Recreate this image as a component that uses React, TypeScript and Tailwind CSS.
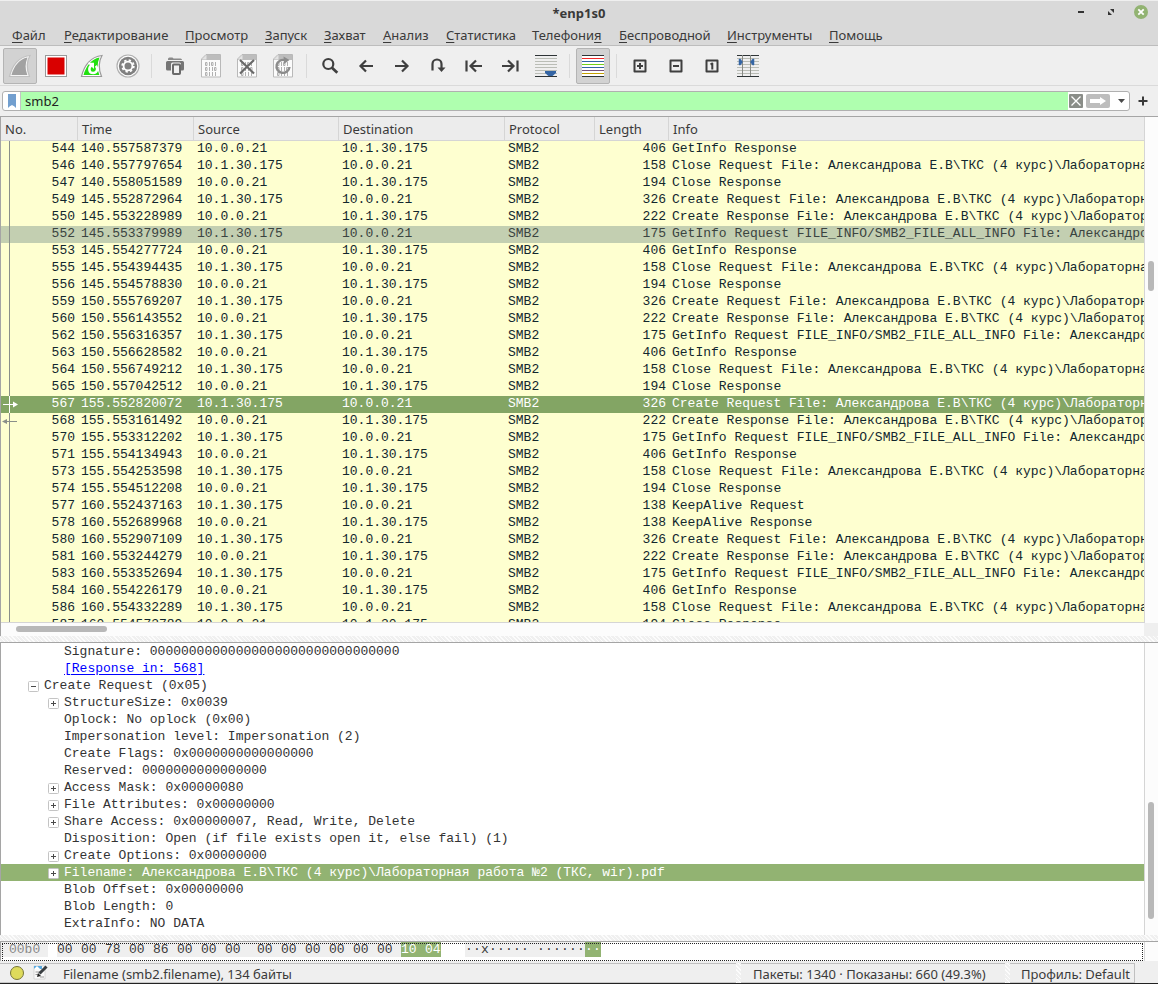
import React from 'react';

const menu = [
  ['', 'Ф', 'айл'],
  ['', 'Р', 'едактирование'],
  ['', 'П', 'росмотр'],
  ['', 'З', 'апуск'],
  ['', 'З', 'ахват'],
  ['', 'А', 'нализ'],
  ['', 'С', 'татистика'],
  ['Телефони', 'я', ''],
  ['', 'Б', 'еспроводной'],
  ['', 'И', 'нструменты'],
  ['', 'П', 'омощь'],
];

const CLIENT = '10.1.30.175';
const SERVER = '10.0.0.21';
const PATH = 'Александрова Е.В\\ТКС (4 курс)\\Лабораторная работа №2';

type Kind = 'infoRes' | 'closeReq' | 'closeRes' | 'createReq' | 'createRes' | 'infoReq' | 'aliveReq' | 'aliveRes';

const kinds: Record<Kind, { fromClient: boolean; length: number; info: string }> = {
  infoRes: { fromClient: false, length: 406, info: 'GetInfo Response' },
  closeReq: { fromClient: true, length: 158, info: 'Close Request File: ' + PATH },
  closeRes: { fromClient: false, length: 194, info: 'Close Response' },
  createReq: { fromClient: true, length: 326, info: 'Create Request File: ' + PATH },
  createRes: { fromClient: false, length: 222, info: 'Create Response File: ' + PATH },
  infoReq: { fromClient: true, length: 175, info: 'GetInfo Request FILE_INFO/SMB2_FILE_ALL_INFO File: ' + PATH },
  aliveReq: { fromClient: true, length: 138, info: 'KeepAlive Request' },
  aliveRes: { fromClient: false, length: 138, info: 'KeepAlive Response' },
};

const packets: [number, string, Kind][] = [
  [544, '140.557587379', 'infoRes'],
  [546, '140.557797654', 'closeReq'],
  [547, '140.558051589', 'closeRes'],
  [549, '145.552872964', 'createReq'],
  [550, '145.553228989', 'createRes'],
  [552, '145.553379989', 'infoReq'],
  [553, '145.554277724', 'infoRes'],
  [555, '145.554394435', 'closeReq'],
  [556, '145.554578830', 'closeRes'],
  [559, '150.555769207', 'createReq'],
  [560, '150.556143552', 'createRes'],
  [562, '150.556316357', 'infoReq'],
  [563, '150.556628582', 'infoRes'],
  [564, '150.556749212', 'closeReq'],
  [565, '150.557042512', 'closeRes'],
  [567, '155.552820072', 'createReq'],
  [568, '155.553161492', 'createRes'],
  [570, '155.553312202', 'infoReq'],
  [571, '155.554134943', 'infoRes'],
  [573, '155.554253598', 'closeReq'],
  [574, '155.554512208', 'closeRes'],
  [577, '160.552437163', 'aliveReq'],
  [578, '160.552689968', 'aliveRes'],
  [580, '160.552907109', 'createReq'],
  [581, '160.553244279', 'createRes'],
  [583, '160.553352694', 'infoReq'],
  [584, '160.554226179', 'infoRes'],
  [586, '160.554332289', 'closeReq'],
  [587, '160.554573789', 'closeRes'],
];

const tree: { text: string; box?: '+' | '-'; top?: boolean; link?: boolean; selected?: boolean }[] = [
  { text: 'Signature: 00000000000000000000000000000000' },
  { text: '[Response in: 568]', link: true },
  { text: 'Create Request (0x05)', box: '-', top: true },
  { text: 'StructureSize: 0x0039', box: '+' },
  { text: 'Oplock: No oplock (0x00)' },
  { text: 'Impersonation level: Impersonation (2)' },
  { text: 'Create Flags: 0x0000000000000000' },
  { text: 'Reserved: 0000000000000000' },
  { text: 'Access Mask: 0x00000080', box: '+' },
  { text: 'File Attributes: 0x00000000', box: '+' },
  { text: 'Share Access: 0x00000007, Read, Write, Delete', box: '+' },
  { text: 'Disposition: Open (if file exists open it, else fail) (1)' },
  { text: 'Create Options: 0x00000000', box: '+' },
  { text: 'Filename: Александрова Е.В\\ТКС (4 курс)\\Лабораторная работа №2 (ТКС, wir).pdf', box: '+', selected: true },
  { text: 'Blob Offset: 0x00000000' },
  { text: 'Blob Length: 0' },
  { text: 'ExtraInfo: NO DATA' },
];

const hexBytes = '00 00 78 00 86 00 00 00 00 00 00 00 00 00 10 04'.split(' ');
const ascii = '··x·············'.split('');

const ink = '#3f3f3f';

function Icon({ children }: { children: React.ReactNode }) {
  return (
    <svg width="24" height="24" viewBox="0 0 24 24" fill="none" aria-hidden="true">
      {children}
    </svg>
  );
}

function Page() {
  return (
    <>
      <path d="M7 .5h14.500v22.500h-19v-18z" fill="#fbfbfb" stroke="#b9b9b9" />
      <path d="M7 1h14v5h-18v-1z" fill="#bdbdbd" />
      <path d="M3 5.500l4.500-4.500v4.500z" fill="#e4e4e4" />
      <g fill="none" stroke="#b0b0b0" strokeWidth="1">
        <path d="M6.500 8.500h1.500v3h-1.500zM12.500 8.500h1.500v3h-1.500z" />
        <path d="M6.500 13.500h1.500v3h-1.500zM15.500 13.500h1.500v3h-1.500z" />
        <path d="M6.500 18.500h1.500v3h-1.500z" />
        <path d="M10.500 8v4M16.500 8v4M10.500 13v4M13.500 13v4M10.500 18v4M13.500 18v4M16.500 18v4" />
      </g>
    </>
  );
}

function Fin({ color, edge }: { color: string; edge: string }) {
  return (
    <path
      d="M1.500 22.500C4 12 10.500 2.500 22 1.500C18.500 7.500 18.500 15 21.500 22.500z"
      fill={color}
      stroke={edge}
      strokeWidth="1.200"
    />
  );
}

const stripes = ['#ef2929', '#3465a4', '#73d216', '#3465a4', '#75507b', '#c4a000'];

const tools: ({ label: string; pressed?: boolean; icon: React.ReactNode } | null)[] = [
  {
    label: 'Начать захват',
    pressed: true,
    icon: (
      <>
        <Fin color="#f5f5f5" edge="#c0c0c0" />
        <path d="M3.500 21C6 12.500 11 5 19.500 3.500C17 9.500 17 15 19.300 21z" fill="#a2a2a2" />
      </>
    ),
  },
  {
    label: 'Остановить захват',
    icon: (
      <>
        <rect x="1.500" y="1.500" width="21" height="21" fill="#fff" stroke="#999" />
        <rect x="3.500" y="3.500" width="17" height="17" fill="#d90000" />
      </>
    ),
  },
  {
    label: 'Перезапустить захват',
    icon: (
      <>
        <Fin color="#fff" edge="#999" />
        <path d="M3.500 21C6 12.500 11 5 19.500 3.500C17 9.500 17 15 19.300 21z" fill="#22e010" />
        <path d="M7.500 8.800h6.500v6.200z" fill="#fff" />
        <path d="M11.500 11.200C8 14 9 19 13.200 19C17.200 19 18.300 14.500 15.800 11.800" stroke="#fff" strokeWidth="2.500" />
      </>
    ),
  },
  {
    label: 'Параметры захвата',
    icon: (
      <>
        <circle cx="12" cy="12" r="11" fill="#fff" stroke="#b0b0b0" strokeWidth="1.200" />
        <circle cx="12" cy="12" r="9.200" fill="#808080" />
        <circle cx="12" cy="12" r="5.800" stroke="#fff" strokeWidth="1.800" strokeDasharray="2.300 2.255" />
        <circle cx="12" cy="12" r="4.400" stroke="#fff" strokeWidth="1.800" />
      </>
    ),
  },
  null,
  {
    label: 'Открыть файл',
    icon: (
      <>
        <path d="M5 6V5a1.500 1.500 0 0 1 1.500-1.500h3l1 1h7A1.500 1.500 0 0 1 19 6z" fill="#8a8a8a" />
        <path d="M4.500 7h15A1.500 1.500 0 0 1 21 8.500V15a1.500 1.500 0 0 1-1.500 1.500h-15A1.500 1.500 0 0 1 3 15V8.500A1.500 1.500 0 0 1 4.500 7z" fill="#757575" />
        <rect x="8" y="8.500" width="10" height="13" rx="1.500" fill="#efefef" />
        <rect x="10" y="10.500" width="7" height="9.500" rx=".800" stroke="#6a6a6a" strokeWidth="2" fill="#efefef" />
      </>
    ),
  },
  { label: 'Сохранить файл', icon: <Page /> },
  {
    label: 'Закрыть файл',
    icon: (
      <>
        <Page />
        <path d="M5 6l14 13.500M19 6L5 19.500" stroke="#696969" strokeWidth="2.200" />
      </>
    ),
  },
  {
    label: 'Перезагрузить файл',
    icon: (
      <>
        <Page />
        <path d="M14 6.200a6.500 6.500 0 1 0 4.500 6.800" stroke="#8c8c8c" strokeWidth="2.400" />
        <path d="M12.500 2.500l6 3.500-5.500 4z" fill="#8c8c8c" />
      </>
    ),
  },
  null,
  {
    label: 'Найти пакет',
    icon: (
      <>
        <circle cx="10.300" cy="10" r="5" stroke={ink} strokeWidth="2.200" />
        <path d="M14 13.800l5.300 5" stroke={ink} strokeWidth="2.800" />
      </>
    ),
  },
  { label: 'Назад', icon: <path d="M19 12H7M12 6.500L6.500 12l5.500 5.500" stroke={ink} strokeWidth="2.200" /> },
  { label: 'Вперёд', icon: <path d="M5 12h12M12 6.500l5.500 5.500-5.500 5.500" stroke={ink} strokeWidth="2.200" /> },
  {
    label: 'Перейти к пакету',
    icon: (
      <>
        <path d="M6.500 16.500V10a4.500 4.500 0 0 1 9 0v5" stroke={ink} strokeWidth="2.200" />
        <path d="M11.500 13.500h8l-4 4.500z" fill={ink} />
      </>
    ),
  },
  {
    label: 'К первому пакету',
    icon: <path d="M4.500 6.500v11M20 12H9M14 6.500L8.500 12l5.500 5.500" stroke={ink} strokeWidth="2.200" />,
  },
  {
    label: 'К последнему пакету',
    icon: <path d="M19.500 6.500v11M4 12h11M10 6.500l5.500 5.500-5.500 5.500" stroke={ink} strokeWidth="2.200" />,
  },
  {
    label: 'Автопрокрутка',
    icon: (
      <>
        <path d="M1 4.500h22M1 7.500h22M1 10.500h22M1 13.500h22M1 16.500h22M1 19.500h22" stroke="#babdb6" />
        <path d="M1 1.500h22M1 22.500h22" stroke="#2e3436" />
        <path d="M11 17h11v2l-3.500 3h-4l-3.500-3z" fill="#3465a4" />
      </>
    ),
  },
  null,
  {
    label: 'Раскраска пакетов',
    pressed: true,
    icon: (
      <>
        <path d="M1 1h22v22H1z" fill="#fff" />
        {stripes.map((c, i) => (
          <path key={i} d={`M1 ${4.5 + i * 3}h22`} stroke={c} />
        ))}
        <path d="M1 1.500h22M1 22.500h22" stroke="#2e3436" />
      </>
    ),
  },
  null,
  {
    label: 'Увеличить',
    icon: <path d="M6.500 6.500h11v11h-11zM9 12h6M12 9v6" stroke={ink} strokeWidth="2" strokeLinejoin="round" />,
  },
  {
    label: 'Уменьшить',
    icon: <path d="M6.500 6.500h11v11h-11zM9 12h6" stroke={ink} strokeWidth="2" strokeLinejoin="round" />,
  },
  {
    label: 'Обычный размер',
    icon: <path d="M6.500 6.500h11v11h-11zM10.500 10.300l1.800-.800v6" stroke={ink} strokeWidth="2" strokeLinejoin="round" />,
  },
  {
    label: 'Ширина столбцов',
    icon: (
      <>
        <path d="M1 4.500h22M1 7.500h22M1 10.500h22M1 13.500h22M1 16.500h22M1 19.500h22" stroke="#babdb6" />
        <path d="M1 1.500h22M1 22.500h22" stroke="#2e3436" />
        <path d="M6.500 1v21M14.500 1v21" stroke="#888a85" />
        <path d="M3 5h1.500L6.500 8 4.500 11H3zM18 5h-1.500L14.500 8l2 3H18z" fill="#3465a4" stroke="#3465a4" strokeWidth=".500" />
      </>
    ),
  },
];

function Splitter() {
  return (
    <div className="h-[6px] shrink-0 bg-[repeating-linear-gradient(45deg,#fcfcfc_0px,#fcfcfc_1px,#f0f0f0_1px,#f0f0f0_3px)]" />
  );
}

function VSplitter() {
  return (
    <div className="w-[5px] shrink-0 bg-[repeating-linear-gradient(45deg,#fcfcfc_0px,#fcfcfc_1px,#f0f0f0_1px,#f0f0f0_3px)]" />
  );
}

function Gutter({ no }: { no: number }) {
  const c = no === 567 ? '#ffffff' : '#8a8f8a';
  return (
    <svg width="19" height="17" viewBox="0 0 19 17" className="shrink-0" aria-hidden="true">
      <path d="M8.500 0v17" stroke={c} />
      {no === 567 && <path d="M2 8.500h11" stroke={c} />}
      {no === 567 && <path d="M12 5.500l5 3-5 3z" fill={c} />}
      {no === 568 && <path d="M16 8.500H5" stroke={c} />}
      {no === 568 && <path d="M6 6L1 8.500 6 11z" fill={c} />}
    </svg>
  );
}

export default function App() {
  return (
    <div className="flex h-screen flex-col overflow-hidden border-b border-[#222] bg-[#efefef] font-['Noto_Sans',sans-serif] text-[13px] text-[#3a3a3a]">
      <header className="shrink-0 border-b border-[#bdbdbd] border-t border-t-[#efefef] bg-[#d9d9d9]">
        <div className="grid h-6 grid-cols-[1fr_auto_1fr] items-center">
          <span />
          <h1 className="text-[13px] font-bold leading-6">*enp1s0</h1>
          <div className="flex items-center justify-end gap-4 pr-[10px] pb-[2px]">
            <button aria-label="Свернуть">
              <svg width="14" height="14" viewBox="0 0 14 14" className="block"><path d="M4 7h6" stroke="#333" strokeWidth="2" /></svg>
            </button>
            <button aria-label="Развернуть">
              <svg width="14" height="14" viewBox="0 0 14 14" className="block"><path d="M6 4h4v4zM4 6v4h4z" fill="#333" /></svg>
            </button>
            <button aria-label="Закрыть">
              <svg width="14" height="14" viewBox="0 0 14 14" className="block">
                <circle cx="7" cy="7" r="7" fill="#92b372" />
                <path d="M4.300 4.300l5.400 5.400M9.700 4.300L4.300 9.700" stroke="#fff" strokeWidth="1.800" />
              </svg>
            </button>
          </div>
        </div>
        <nav className="grid h-5 grid-cols-[52px_121px_80px_59px_59px_63px_86px_87px_108px_102px_auto] pl-3">
          {menu.map(([a, u, b], i) => (
            <button key={i} className="whitespace-nowrap text-left leading-5">
              {a}
              <span className="underline underline-offset-2">{u}</span>
              {b}
            </button>
          ))}
        </nav>
      </header>

      <div className="flex h-10 shrink-0 items-center gap-[2px] border-b border-[#dadada] pl-[3px]">
        {tools.map((t, i) =>
          t ? (
            <button
              key={i}
              aria-label={t.label}
              className={
                t.pressed
                  ? 'flex h-9 w-[34px] items-center justify-center rounded-xs border border-[#b4b4b4] bg-[#d2d2d2]'
                  : 'flex h-9 w-[34px] items-center justify-center'
              }
            >
              <Icon>{t.icon}</Icon>
            </button>
          ) : (
            <div key={i} className="flex h-6 w-[9px] justify-center">
              <div className="w-px bg-[#dadada]" />
            </div>
          ),
        )}
      </div>

      <div className="flex h-[30px] shrink-0 items-center pl-[2px]">
        <div className="flex h-5 flex-1 items-stretch overflow-hidden rounded-[3px] border border-[#b0b0b0] bg-white">
          <button aria-label="Закладки" className="flex w-[18px] shrink-0 items-center justify-center border-r border-[#c4c4c4]">
            <svg width="10" height="14" viewBox="0 0 10 14"><path d="M1 0h8v14l-1.500-1.500L5 11l-2.500 1.500L1 14z" fill="#729fcf" /></svg>
          </button>
          <input aria-label="Фильтр отображения" defaultValue="smb2" className="min-w-0 flex-1 bg-[#afffaf] px-1 text-[13px] leading-4 text-[#222] outline-none" />
          <div className="flex items-center gap-[3px] pl-px">
            <button aria-label="Очистить">
              <svg width="14" height="14" viewBox="0 0 14 14">
                <rect width="14" height="14" rx="1" fill="#8a8d88" />
                <path d="M2.500 2.500l9 9M11.500 2.500l-9 9" stroke="#fff" strokeWidth="1.300" />
              </svg>
            </button>
            <button aria-label="Применить">
              <svg width="24" height="14" viewBox="0 0 24 14">
                <rect width="24" height="14" rx="2" fill="#bdbdbd" />
                <path d="M4 5h10V3l6 4-6 4V9H4z" fill="#fff" />
              </svg>
            </button>
            <button aria-label="История фильтров" className="flex h-4 w-4 items-center justify-end pr-1">
              <svg width="7" height="4" viewBox="0 0 7 4"><path d="M0 0h7L3.500 4z" fill="#4a4a4a" /></svg>
            </button>
          </div>
        </div>
        <button aria-label="Добавить кнопку" className="flex w-7 items-center justify-center pr-[2px]">
          <svg width="10" height="10" viewBox="0 0 10 10"><path d="M5 .500v9M.500 5h9" stroke="#3a3a3a" strokeWidth="2" /></svg>
        </button>
      </div>

      <section className="flex min-h-0 flex-1 border-t border-l border-[#a5a5a5] bg-[#fcfcfc]">
        <div className="flex min-w-0 flex-1 flex-col">
          <div className="min-h-0 flex-1 overflow-hidden border-b border-[#d5d5d5] bg-[#feffd0]">
            <table className="w-full table-fixed border-collapse">
              <colgroup>
                <col className="w-[77px]" />
                <col className="w-[116px]" />
                <col className="w-[145px]" />
                <col className="w-[166px]" />
                <col className="w-[90px]" />
                <col className="w-[74px]" />
                <col />
              </colgroup>
              <thead>
                <tr className="h-6 bg-[#ececec] text-left">
                  {['No.', 'Time', 'Source', 'Destination', 'Protocol', 'Length', 'Info'].map((h) => (
                    <th key={h} className="group p-0 font-normal">
                      <div className="h-6 border-r border-b border-[#d5d5d5] pl-1 leading-6 group-last:border-r-0">{h}</div>
                    </th>
                  ))}
                </tr>
              </thead>
              <tbody className="font-['Liberation_Mono',monospace] leading-[15px]">
                {packets.map(([no, time, kind]) => {
                  const k = kinds[kind];
                  return (
                    <tr
                      key={no}
                      className={
                        no === 567
                          ? 'h-[17px] bg-[#83a564] text-white'
                          : no === 552
                            ? 'h-[17px] bg-[#c3cfb1] text-[#3a4340]'
                            : 'h-[17px] text-[#12272e]'
                      }
                    >
                      <td className="p-0 align-top">
                        <div className="flex h-[17px] justify-between pr-[3px]">
                          <Gutter no={no} />
                          {no}
                        </div>
                      </td>
                      <td className="p-0 pl-[3px] align-top">{time}</td>
                      <td className="p-0 pl-[3px] align-top">{k.fromClient ? CLIENT : SERVER}</td>
                      <td className="p-0 pl-[3px] align-top">{k.fromClient ? SERVER : CLIENT}</td>
                      <td className="p-0 pl-[3px] align-top">SMB2</td>
                      <td className="p-0 pr-[3px] text-right align-top">{k.length}</td>
                      <td className="overflow-hidden whitespace-nowrap p-0 pl-[3px] align-top">{k.info}</td>
                    </tr>
                  );
                })}
              </tbody>
            </table>
          </div>
          <div className="flex h-[13px] shrink-0 items-start pt-[3px] pl-[15px]">
            <div className="h-[6px] w-[91px] rounded-full bg-[#b8b8b8]" />
          </div>
        </div>
        <div className="flex w-[14px] shrink-0 flex-col">
          <div className="flex flex-1 flex-col items-start border-l border-[#d5d5d5] pt-36 pl-[3px]">
            <div className="h-[30px] w-[6px] rounded-full bg-[#b8b8b8]" />
          </div>
          <div className="h-[13px] bg-[#efefef]" />
        </div>
      </section>

      <Splitter />

      <section className="flex h-[293px] shrink-0 border-t border-l border-[#a5a5a5] bg-white">
        <ul className="min-w-0 flex-1 overflow-hidden font-['Liberation_Mono',monospace] leading-[17px]">
          {tree.map((n) => (
            <li
              key={n.text}
              className={
                n.selected
                  ? 'flex h-[17px] whitespace-pre bg-[#92b372] text-white'
                  : 'flex h-[17px] whitespace-pre text-[#333]'
              }
            >
              <span className={n.top ? 'flex w-[43px] shrink-0 items-end justify-end pr-[5px] pb-[2px]' : 'flex w-[63px] shrink-0 items-end justify-end pr-[5px] pb-[2px]'}>
                {n.box && (
                  <button aria-label={n.box === '+' ? 'Развернуть узел' : 'Свернуть узел'}>
                    <svg width="11" height="11" viewBox="0 0 11 11" className="block">
                      <rect x=".500" y=".500" width="10" height="10" rx="1" fill="#fff" stroke="#c4c4c4" />
                      <path d={n.box === '+' ? 'M3 5.500h5M5.500 3v5' : 'M3 5.500h5'} stroke="#4a4a4a" />
                    </svg>
                  </button>
                )}
              </span>
              {n.link ? (
                <a href="#568" className="text-[#0000ff] underline underline-offset-2">{n.text}</a>
              ) : (
                <span>{n.text}</span>
              )}
            </li>
          ))}
        </ul>
        <div className="flex w-[14px] shrink-0 flex-col items-start border-l border-[#d5d5d5] bg-[#fcfcfc] pt-[159px] pl-[3px]">
          <div className="h-[117px] w-[6px] rounded-full bg-[#b8b8b8]" />
        </div>
      </section>

      <Splitter />

      <section className="flex h-5 shrink-0 border-t border-l border-[#a5a5a5] bg-white">
        <div className="relative flex min-w-0 flex-1 font-['Liberation_Mono',monospace] leading-[15px]">
          <span className="h-[15px] w-[47px] bg-[#efefef] pl-2 text-[#8a8a8a]">00b0</span>
          <div className="ml-[9px] flex h-[15px]">
            {hexBytes.map((b, i) => (
              <React.Fragment key={i}>
                {i === 8 && <span className="w-2 bg-[#efefef]" />}
                <span className={i === 15 ? 'w-4 bg-[#92b372] text-white' : i === 14 ? 'w-6 bg-[#92b372] text-white' : 'w-6 bg-[#efefef]'}>{b}</span>
              </React.Fragment>
            ))}
          </div>
          <div className="ml-6 flex h-[15px]">
            {ascii.map((c, i) => (
              <React.Fragment key={i}>
                {i === 8 && <span className="w-2 bg-[#efefef]" />}
                <span className={i > 13 ? 'w-2 bg-[#92b372] text-white' : 'w-2 bg-[#efefef]'}>{c}</span>
              </React.Fragment>
            ))}
          </div>
          <div className="pointer-events-none absolute inset-x-px top-px bottom-0 border border-dotted border-[#222]" />
        </div>
        <div className="w-[14px] shrink-0 border-l border-[#d5d5d5] bg-[#fcfcfc]" />
      </section>

      <footer className="flex h-[22px] shrink-0 pt-[2px] leading-5">
        <div className="flex min-w-0 flex-1 items-start border-t border-b border-t-[#c0c0c0] border-b-[#c8c8c8] pl-[9px]">
          <button aria-label="Экспертная информация">
            <svg width="16" height="18" viewBox="0 0 16 18" className="block">
              <circle cx="8" cy="9" r="6.500" fill="#dedb5c" stroke="#77763a" />
            </svg>
          </button>
          <button aria-label="Комментарии к файлу" className="ml-[7px]">
            <svg width="16" height="18" viewBox="0 0 16 18" className="block">
              <path d="M2 2h11v13H2z" fill="#fafafa" stroke="#bbb" strokeWidth=".500" />
              <path d="M2 2h8v3H2z" fill="#5aaae0" />
              <path d="M2 5l3-3 3 3z" fill="#fff" />
              <path d="M3.500 8h5M3.500 10.500h3M8 13h4" stroke="#999" />
              <path d="M14.500 2.500L7.500 9.500" stroke="#3a3f42" strokeWidth="3" />
              <path d="M5 13l1-4 3 3z" fill="#222" />
            </svg>
          </button>
          <span className="ml-[15px] truncate">Filename (smb2.filename), 134 байты</span>
        </div>
        <VSplitter />
        <div className="w-[264px] shrink-0 border-t border-b border-t-[#c0c0c0] border-b-[#c8c8c8] pl-3 whitespace-nowrap">
          Пакеты: 1340 · Показаны: 660 (49.3%)
        </div>
        <VSplitter />
        <div className="w-[125px] shrink-0 border-t border-r border-b border-t-[#c0c0c0] border-r-[#c0c0c0] border-b-[#c8c8c8] pl-[11px] whitespace-nowrap">
          Профиль: Default
        </div>
        <div className="w-[23px] shrink-0" />
      </footer>
    </div>
  );
}
